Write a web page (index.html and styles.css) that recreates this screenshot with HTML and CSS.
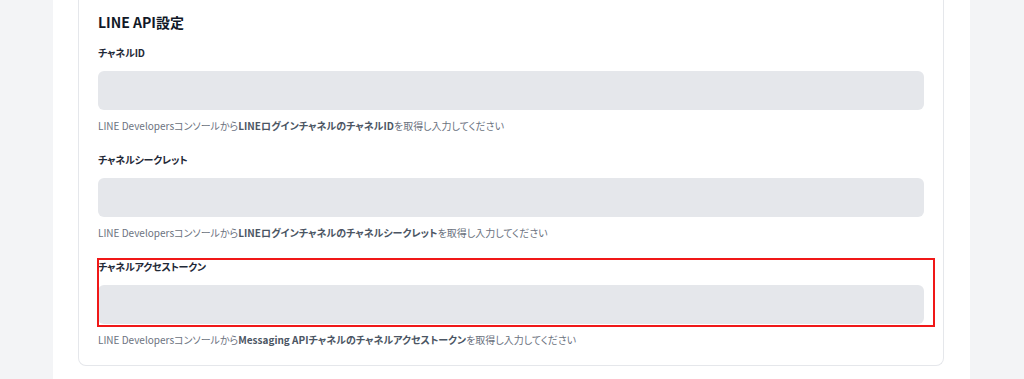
FILE: index.html
```html
<!DOCTYPE html>
<html lang="ja">
<head>
    <meta charset="UTF-8">
    <meta name="viewport" content="width=device-width, initial-scale=1.0">
    <title>LINE API設定</title>
    <link rel="stylesheet" href="styles.css">
</head>
<body>
    <div class="page">
        <div class="card">
            <h2 class="card-title">LINE API設定</h2>

            <div class="field">
                <label for="channelId">チャネルID</label>
                <input type="text" id="channelId">
                <p class="help">LINE Developersコンソールから<b>LINEログインチャネルのチャネルID</b>を取得し入力してください</p>
            </div>

            <div class="field">
                <label for="channelSecret">チャネルシークレット</label>
                <input type="text" id="channelSecret">
                <p class="help">LINE Developersコンソールから<b>LINEログインチャネルのチャネルシークレット</b>を取得し入力してください</p>
            </div>

            <div class="field highlighted">
                <label for="accessToken">チャネルアクセストークン</label>
                <input type="text" id="accessToken">
                <p class="help">LINE Developersコンソールから<b>Messaging APIチャネルのチャネルアクセストークン</b>を取得し入力してください</p>
                <div class="mark"></div>
            </div>
        </div>
    </div>
</body>
</html>
```

FILE: styles.css
```css
body { margin: 0; background-color: #f3f4f6; font-family: "Noto Sans CJK JP", "Noto Sans", sans-serif; font-feature-settings: "palt"; }
.page { background-color: #fff; margin-left: 53px; width: 917px; height: 379px; padding-left: 25px; box-sizing: border-box; }
.card { width: 866px; box-sizing: border-box; border: 1px solid #e5e7eb; border-top: none; border-radius: 0 0 8px 8px; padding: 12px 19px 17px 19px; }
.card-title { margin: 0 0 13px 0; font-size: 14px; line-height: 20px; font-weight: 700; color: #111827; }
.field { margin-bottom: 18px; position: relative; }
.field:last-of-type { margin-bottom: 0; }
label { display: block; margin-bottom: 10px; font-size: 10px; line-height: 16px; font-weight: 700; color: #1f2937; letter-spacing: -0.2px; }
input[type="text"] { display: block; width: 100%; height: 39px; box-sizing: border-box; border: none; border-radius: 6px; background-color: #e5e7eb; }
.help { margin: 8px 0 0 0; font-size: 10px; line-height: 16px; color: #6b7280; }
.help b { color: #4b5563; }
.mark { position: absolute; top: -1px; left: -1px; right: -11px; height: 69px; border: 2px solid #f01818; box-sizing: border-box; }
```
